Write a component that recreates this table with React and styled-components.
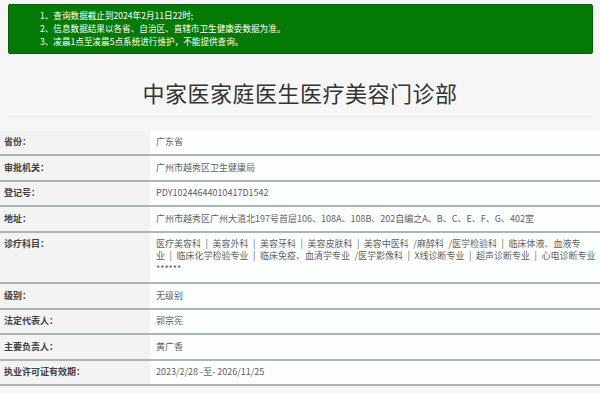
import React from 'react';
import styled, { createGlobalStyle } from 'styled-components';

const GlobalStyle = createGlobalStyle`
    html, body {
        margin: 0;
        padding: 0;
        background: #f6f6f6;
    }
    body {
        font-family: "Noto Sans CJK SC", "Noto Sans", sans-serif;
    }
`

const Page = styled.div`
    width: 600px;
    min-height: 393px;
    background: #f6f6f6;
    overflow: hidden;
`

//#region 提示
const Notice = styled.ul`
    list-style: none;
    margin: 4px 7px 0 8px;
    height: 50px;
    box-sizing: border-box;
    padding: 4px 0 0 31px;
    background: #037a03;
    border: 1px solid #0d5c0d;
    border-radius: 2px;
    color: #ffffff;
    font-size: 8.6px;
    line-height: 13px;
`

const NoticeItem = styled.li`
    white-space: nowrap;
`
//#endregion

const Title = styled.h1`
    margin: 0 8px;
    padding: 22px 0 8px;
    border-bottom: 1px solid #e9e9e9;
    text-align: center;
    font-size: 22px;
    line-height: 32px;
    letter-spacing: 0.5px;
    font-weight: 400;
    color: #333333;
`

const Table = styled.div`
    margin-top: 13.5px;
    display: flex;
    flex-direction: column;
`

const Row = styled.div`
    display: grid;
    grid-template-columns: 150px 1fr;
    border-bottom: 2px solid #abb7b3;
    min-height: ${props => props.tall ? '49.5px' : '23.5px'};
    font-size: 9px;
`

const Label = styled.div`
    display: flex;
    align-items: ${props => props.top ? 'flex-start' : 'center'};
    padding: ${props => props.top ? '5px 0 0 4px' : '0 0 0 4px'};
    background: #f3f3f3;
    color: #404040;
    font-weight: 700;
    line-height: 12.5px;
`

const Value = styled.div`
    display: flex;
    align-items: ${props => props.top ? 'flex-start' : 'center'};
    padding: ${props => props.top ? '5px 4px 0 6px' : '0 4px 0 6px'};
    background: #fdfffe;
    color: #616161;
    line-height: 12.5px;
    word-spacing: ${props => props.top ? '2.5px' : 'normal'};
`

// 诊疗科目 各项之间的分隔
const subjects = '医疗美容科\u00a0| 美容外科\u00a0| 美容牙科\u00a0| 美容皮肤科\u00a0| 美容中医科\u00a0/麻醉科\u00a0/医学检验科\u00a0| '
    + '临床体液、血液专业\u00a0| 临床化学检验专业\u00a0| 临床免疫、血清学专业\u00a0/医学影像科\u00a0| X线诊断专业\u00a0| 超声诊断专业\u00a0| 心电诊断专业 ******';

const rows = [
    { label: '省份：', value: '广东省' },
    { label: '审批机关：', value: '广州市越秀区卫生健康局' },
    { label: '登记号：', value: 'PDY10244644010417D1542' },
    { label: '地址：', value: '广州市越秀区广州大道北197号首层106、108A、108B、202自编之A、B、C、E、F、G、402室' },
    { label: '诊疗科目：', tall: true, value: subjects },
    { label: '级别：', value: '无级别' },
    { label: '法定代表人：', value: '郭宗宪' },
    { label: '主要负责人：', value: '黄广香' },
    { label: '执业许可证有效期：', value: '2023/2/28 -至- 2026/11/25' },
];

export default function App() {
    return (
        <>
            <GlobalStyle />
            <Page>
                <Notice>
                    <NoticeItem>1、查询数据截止到2024年2月11日22时;</NoticeItem>
                    <NoticeItem>2、信息数据结果以各省、自治区、直辖市卫生健康委数据为准。</NoticeItem>
                    <NoticeItem>3、凌晨1点至凌晨5点系统进行维护，不能提供查询。</NoticeItem>
                </Notice>
                <Title>中家医家庭医生医疗美容门诊部</Title>
                <Table>
                    {rows.map((r) => (
                        <Row key={r.label} tall={r.tall}>
                            <Label top={r.tall}>{r.label}</Label>
                            <Value top={r.tall}>{r.value}</Value>
                        </Row>
                    ))}
                </Table>
            </Page>
        </>
    )
}
